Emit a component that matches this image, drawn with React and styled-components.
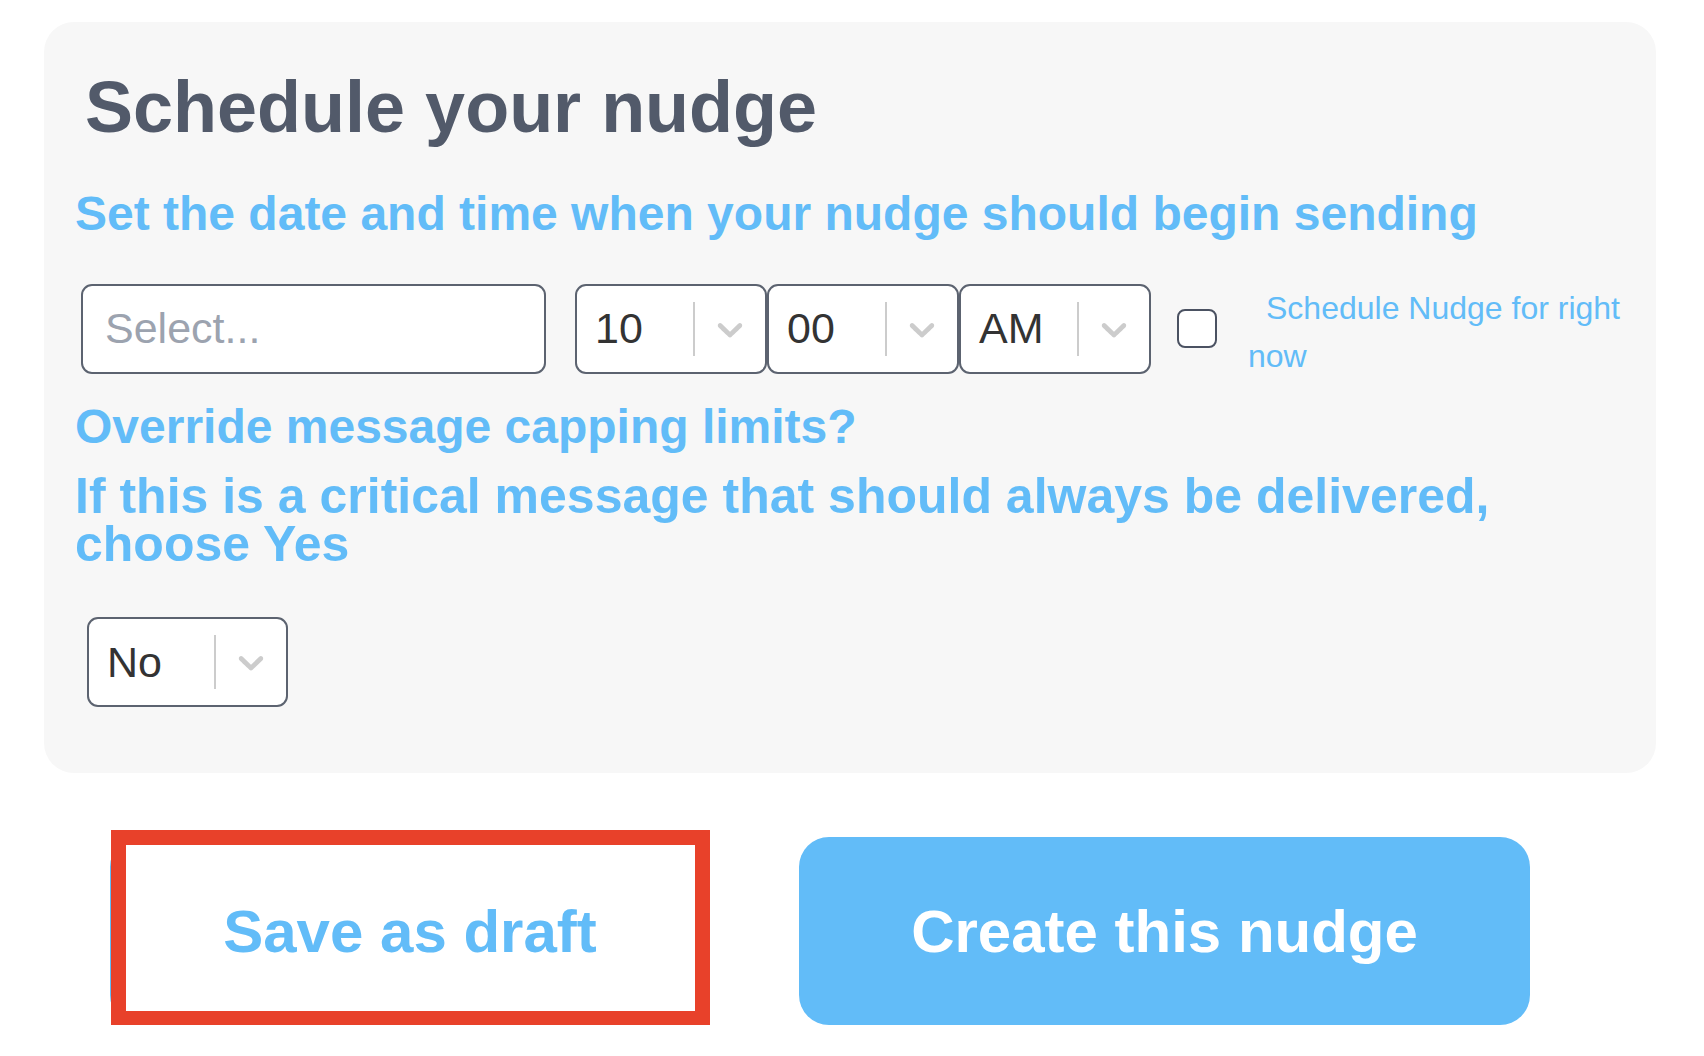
import React from "react";
import styled, { createGlobalStyle } from "styled-components";

const GlobalStyle = createGlobalStyle`
  html, body { margin: 0; padding: 0; background: #ffffff; }
  body { font-family: "Liberation Sans", Arial, Helvetica, sans-serif; }
  *, *::before, *::after { box-sizing: border-box; }
`;

const BLUE = "#62bcf8";

const Page = styled.div`
  width: 1704px;
  padding: 22px 0 0 44px;
`;

const Card = styled.section`
  width: 1612px;
  background: #f7f7f7;
  border-radius: 30px;
  padding: 44px 31px 66px 31px;
`;

const Title = styled.h1`
  margin: 0 0 0 10px;
  font-size: 72px;
  line-height: 1.15;
  font-weight: 700;
  color: #525a6a;
`;

const Heading = styled.h3`
  margin: ${(p) => p.$top}px 0 0 0;
  max-width: ${(p) => (p.$narrow ? "1450px" : "none")};
  font-size: ${(p) => p.$size || 48}px;
  line-height: ${(p) => p.$lh || "1.15"};
  font-weight: 700;
  color: ${BLUE};
`;

const Row = styled.div`
  display: flex;
  align-items: flex-start;
  margin: 43px 0 0 6px;
`;

const DateInput = styled.input`
  flex: none;
  width: 465px;
  height: 90px;
  margin-right: 29px;
  padding: 0 0 0 22px;
  background: #ffffff;
  border: 2px solid #5c6370;
  border-radius: 11px;
  font-family: inherit;
  font-size: 43px;
  color: #333333;
  outline: none;
  &::placeholder { color: #9ca3af; }
`;

const TimeGroup = styled.div`
  flex: none;
  display: flex;
  margin-right: 26px;
`;

const Control = styled.div`
  flex: none;
  display: flex;
  align-items: stretch;
  width: ${(p) => p.$width}px;
  height: 90px;
  background: #ffffff;
  border: 2px solid #5c6370;
  border-radius: 11px;
`;

const Value = styled.div`
  flex: 1;
  display: flex;
  align-items: center;
  padding-left: 18px;
  font-size: 43px;
  color: #333333;
`;

const Separator = styled.span`
  width: 2px;
  margin: 16px 0;
  background: #cccccc;
`;

const Indicator = styled.div`
  width: 70px;
  display: flex;
  align-items: center;
  justify-content: center;
`;

const Checkbox = styled.input`
  flex: none;
  appearance: none;
  -webkit-appearance: none;
  width: 40px;
  height: 39px;
  margin: 25px 31px 0 0;
  background: #ffffff;
  border: 2px solid #4b5262;
  border-radius: 8px;
`;

const NowLabel = styled.label`
  flex: none;
  width: 377px;
  font-size: 32px;
  line-height: 48px;
  color: ${BLUE};
  text-indent: 18px;
`;

const CappingSelect = styled.div`
  margin: 49px 0 0 12px;
`;

const ButtonRow = styled.div`
  display: flex;
  gap: 89px;
  margin-top: 64px;
  padding-left: 66px;
`;

const Button = styled.button`
  position: relative;
  flex: none;
  width: ${(p) => p.$width}px;
  height: 188px;
  display: flex;
  align-items: center;
  justify-content: center;
  border-radius: 30px;
  font-family: inherit;
  font-size: 60px;
  font-weight: 700;
  cursor: pointer;
  background: ${(p) => (p.$primary ? BLUE : "#ffffff")};
  color: ${(p) => (p.$primary ? "#ffffff" : BLUE)};
  border: ${(p) => (p.$primary ? "none" : `2px solid ${BLUE}`)};
`;

const HighlightedButton = styled(Button)`
  &::after {
    content: "";
    position: absolute;
    top: -9px;
    left: -1px;
    right: -2px;
    bottom: -3px;
    border: 15px solid #e8412a;
    pointer-events: none;
  }
`;

const Chevron = () => (
  <svg width="42" height="42" viewBox="0 0 20 20" aria-hidden="true">
    <path
      fill="#cccccc"
      d="M4.516 7.548c0.436-0.446 1.043-0.481 1.576 0l3.908 3.747 3.908-3.747c0.533-0.481 1.141-0.446 1.574 0 0.436 0.445 0.408 1.197 0 1.615-0.406 0.418-4.695 4.502-4.695 4.502-0.217 0.223-0.502 0.335-0.787 0.335s-0.57-0.112-0.789-0.335c0 0-4.287-4.084-4.695-4.502s-0.436-1.17 0-1.615z"
    />
  </svg>
);

const Select = ({ value, width }) => (
  <Control $width={width}>
    <Value>{value}</Value>
    <Separator />
    <Indicator>
      <Chevron />
    </Indicator>
  </Control>
);

export default function App() {
  return (
    <>
      <GlobalStyle />
      <Page>
        <Card>
          <Title>Schedule your nudge</Title>
          <Heading $top={37}>Set the date and time when your nudge should begin sending</Heading>
          <Row>
            <DateInput placeholder="Select..." readOnly />
            <TimeGroup>
              <Select value="10" width={192} />
              <Select value="00" width={192} />
              <Select value="AM" width={192} />
            </TimeGroup>
            <Checkbox type="checkbox" id="now" />
            <NowLabel htmlFor="now">Schedule Nudge for right now</NowLabel>
          </Row>
          <Heading $top={19}>Override message capping limits?</Heading>
          <Heading $top={18} $size={50} $lh="48px" $narrow>
            If this is a critical message that should always be delivered, choose Yes
          </Heading>
          <CappingSelect>
            <Select value="No" width={201} />
          </CappingSelect>
        </Card>
        <ButtonRow>
          <HighlightedButton $width={600}>Save as draft</HighlightedButton>
          <Button $primary $width={731}>Create this nudge</Button>
        </ButtonRow>
      </Page>
    </>
  );
}
